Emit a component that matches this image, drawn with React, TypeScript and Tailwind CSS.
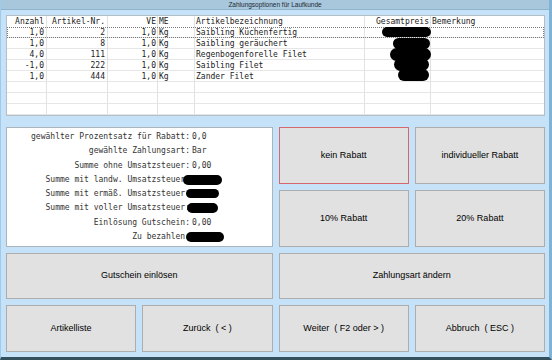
const mono = "font-['DejaVu_Sans_Mono',monospace]"
const sans = "font-['Liberation_Sans',Arial,sans-serif]"

const rows: string[][] = [
  ['1,0', '2', '1,0', 'Kg', 'Saibling Küchenfertig'],
  ['1,0', '8', '1,0', 'Kg', 'Saibling geräuchert'],
  ['4,0', '111', '1,0', 'Kg', 'Regenbogenforelle Filet'],
  ['-1,0', '222', '1,0', 'Kg', 'Saibling Filet'],
  ['1,0', '444', '1,0', 'Kg', 'Zander Filet'],
  ['', '', '', '', ''],
  ['', '', '', '', ''],
  ['', '', '', '', ''],
]

// redaction blobs over the price column: [left, top, width, height] relative to the cell
const priceBlobs: (number[] | null)[] = [
  [17, 0, 49, 10],
  [28, 0, 37, 11],
  [25, -1, 41, 13],
  [29, -2, 35, 13],
  [33, -2, 31, 12],
  null,
  null,
  null,
]

const cols = 'grid grid-cols-[40px_61px_50px_37px_170px_66px_1fr]'

function ArticleTable() {
  return (
    <div className={`bg-white border border-[#b4bec6] ${mono} text-[8px] leading-[11px] text-[#222]`}>
      <div className={`${cols} h-[11px]`}>
        <div className="border-r border-[#e2e2e2] text-right pr-[2px]">Anzahl</div>
        <div className="border-r border-[#e2e2e2] text-right pr-[2px]">Artikel-Nr.</div>
        <div className="border-r border-[#e2e2e2] text-right pr-[1px]">VE</div>
        <div className="border-r border-[#e2e2e2] pl-[1px]">ME</div>
        <div className="border-r border-[#e2e2e2] pl-[1px]">Artikelbezeichnung</div>
        <div className="border-r border-[#e2e2e2] text-right pr-[1px]">Gesamtpreis</div>
        <div className="pl-[1px]">Bemerkung</div>
      </div>
      {rows.map((r, i) => {
        const blob = priceBlobs[i]
        return (
          <div
            key={i}
            className={`${cols} h-[11px] border-b border-[#e6e6e6] ${
              i === 0 ? 'outline-1 outline-dotted outline-[#7a7a7a] -outline-offset-1' : ''
            }`}
          >
            <div className="border-r border-[#e2e2e2] text-right pr-[2px]">{r[0]}</div>
            <div className="border-r border-[#e2e2e2] text-right pr-[2px]">{r[1]}</div>
            <div className="border-r border-[#e2e2e2] text-right pr-[1px]">{r[2]}</div>
            <div className="border-r border-[#e2e2e2] pl-[1px]">{r[3]}</div>
            <div className="border-r border-[#e2e2e2] pl-[1px] whitespace-nowrap">{r[4]}</div>
            <div className="border-r border-[#e2e2e2] relative">
              {blob && (
                <span
                  className="absolute bg-black rounded-full z-10"
                  style={{ left: blob[0], top: blob[1], width: blob[2], height: blob[3] }}
                />
              )}
            </div>
            <div />
          </div>
        )
      })}
    </div>
  )
}

const summary: { label: string; value: string; blob?: number[] }[] = [
  { label: 'gewählter Prozentsatz für Rabatt:', value: '0,0' },
  { label: 'gewählte Zahlungsart:', value: 'Bar' },
  { label: 'Summe ohne Umsatzsteuer:', value: '0,00' },
  { label: 'Summe mit landw. Umsatzsteuer:', value: '', blob: [-7, 2, 39, 10] },
  { label: 'Summe mit ermäß. Umsatzsteuer:', value: '', blob: [-4, 2, 33, 9] },
  { label: 'Summe mit voller Umsatzsteuer:', value: '', blob: [-3, 2, 31, 10] },
  { label: 'Einlösung Gutschein:', value: '0,00' },
  { label: 'Zu bezahlen:', value: '', blob: [-4, 2, 38, 10] },
]

function SummaryPanel() {
  return (
    <div className={`bg-white border border-[#aab4bc] pt-[2px] ${mono} text-[8px] leading-[14.3px] text-[#333]`}>
      {summary.map((s) => (
        <div key={s.label} className="flex">
          <div className="w-[183px] shrink-0 text-right whitespace-nowrap">{s.label}</div>
          <div className="relative pl-[2px]">
            {s.value}
            {s.blob && (
              <span
                className="absolute bg-black rounded-full"
                style={{ left: s.blob[0], top: s.blob[1], width: s.blob[2], height: s.blob[3] }}
              />
            )}
          </div>
        </div>
      ))}
    </div>
  )
}

function Btn({ label, focused, className = '' }: { label: string; focused?: boolean; className?: string }) {
  return (
    <button
      className={`bg-[#e1e1e1] border ${
        focused ? 'border-[#d4686d]' : 'border-[#adadad]'
      } ${sans} text-[9px] text-black whitespace-pre flex items-center justify-center ${className}`}
    >
      {label}
    </button>
  )
}

export default function App() {
  return (
    <div className="w-[552px] h-[360px] overflow-hidden bg-[#c6e2f8] flex flex-col border-l border-[#9fcbe8] border-r-[3px] border-r-[#7eb2d6] border-b-[3px] border-b-[#34505f]">
      <div className={`h-[10px] bg-[#a8c6dc] border-b border-[#8fb3cc] flex items-center justify-center ${sans} text-[6.5px] text-[#1c2a33]`}>
        Zahlungsoptionen für Laufkunde
      </div>

      <div className="flex flex-col pl-[5px] pr-[4px] pt-[5px]">
        <ArticleTable />

        <div className="grid grid-cols-2 gap-[6px] mt-[11px]">
          <SummaryPanel />
          <div className="grid grid-cols-2 grid-rows-[57px_57px] gap-[6px]">
            <Btn label="kein Rabatt" focused />
            <Btn label="individueller Rabatt" />
            <Btn label="10% Rabatt" />
            <Btn label="20% Rabatt" />
          </div>

          <Btn label="Gutschein einlösen" className="h-[46px]" />
          <Btn label="Zahlungsart ändern" className="h-[46px]" />

          <div className="grid grid-cols-2 gap-[6px]">
            <Btn label="Artikelliste" className="h-[47px]" />
            <Btn label="Zurück  ( < )" className="h-[47px]" />
          </div>
          <div className="grid grid-cols-2 gap-[6px]">
            <Btn label="Weiter  ( F2 oder > )" className="h-[47px]" />
            <Btn label="Abbruch  ( ESC )" className="h-[47px]" />
          </div>
        </div>
      </div>
    </div>
  )
}
